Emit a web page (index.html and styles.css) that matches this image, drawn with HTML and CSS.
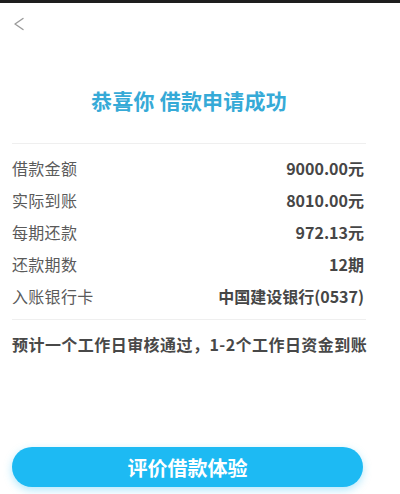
FILE: index.html
```html
<!DOCTYPE html>
<html lang="zh">
<head>
<meta charset="utf-8">
<link rel="stylesheet" href="styles.css">
</head>
<body>
<div class="topbar"></div>
<div class="page">
  <div class="nav">
    <svg class="back" width="12" height="14" viewBox="0 0 12 14"><polyline points="10,1.5 2,7 10,12.5" fill="none" stroke="#9a9a9a" stroke-width="1.4" stroke-linecap="round" stroke-linejoin="round"/></svg>
  </div>
  <h1 class="title">恭喜你 借款申请成功</h1>
  <div class="divider"></div>
  <div class="rows">
    <div class="row"><span class="label">借款金额</span><span class="value">9000.00元</span></div>
    <div class="row"><span class="label">实际到账</span><span class="value">8010.00元</span></div>
    <div class="row"><span class="label">每期还款</span><span class="value">972.13元</span></div>
    <div class="row"><span class="label">还款期数</span><span class="value">12期</span></div>
    <div class="row"><span class="label">入账银行卡</span><span class="value">中国建设银行(0537)</span></div>
  </div>
  <div class="divider"></div>
  <p class="note">预计一个工作日审核通过，1-2个工作日资金到账</p>
  <button class="cta">评价借款体验</button>
</div>
</body>
</html>
```
FILE: styles.css
```css
html, body {
  margin: 0;
  padding: 0;
  background: #fff;
}
body {
  width: 400px;
  height: 494px;
  overflow: hidden;
  font-family: "Noto Sans CJK SC", "Noto Sans", sans-serif;
}
.topbar {
  height: 3px;
  background: #1e1e1e;
}
.page {
  padding: 0 34px 0 12px;
}
.nav {
  height: 40px;
  display: flex;
  align-items: flex-start;
}
.back {
  margin-top: 14px;
  margin-left: 1px;
}
.title {
  margin: 42px 0 28px;
  height: 30px;
  line-height: 30px;
  text-align: center;
  font-size: 21px;
  font-weight: 600;
  color: #36aad7;
  letter-spacing: 0.2px;
}
.divider {
  height: 1px;
  background: #efefef;
}
.rows {
  padding: 8px 0 7px;
}
.row {
  height: 32px;
  display: flex;
  align-items: center;
  justify-content: space-between;
  font-size: 16px;
}
.label {
  color: #5a5a5a;
  letter-spacing: 0.3px;
}
.value {
  color: #464646;
  font-weight: 700;
  margin-right: 2px;
}
.note {
  margin: 13px 0 0;
  line-height: 22px;
  font-size: 16px;
  font-weight: 700;
  color: #484848;
  letter-spacing: 0.45px;
  white-space: nowrap;
}
.cta {
  display: block;
  margin: 92px 3px 0 0;
  width: 351px;
  height: 40px;
  border: none;
  border-radius: 20px;
  background: #1dbaf3;
  color: #fff;
  font-family: inherit;
  font-size: 20px;
  font-weight: 700;
  box-shadow: 0 3px 8px rgba(29, 186, 243, 0.35);
}
```
